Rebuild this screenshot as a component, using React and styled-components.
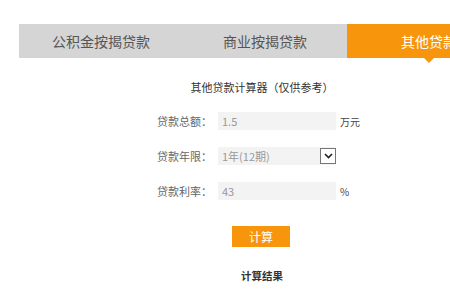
import React, { useState } from 'react'
import styled, { createGlobalStyle } from 'styled-components'

const GlobalStyle = createGlobalStyle`
  body {
    margin: 0;
    background: #fff;
    font-family: "Noto Sans CJK SC", "Liberation Sans", sans-serif;
  }
`

const tabs = ['公积金按揭贷款', '商业按揭贷款', '其他贷款']

const App = () => {
  const [active, setActive] = useState(2)

  return (
    <Page>
      <GlobalStyle />
      <TabBar>
        {tabs.map((t, i) => (
          <Tab key={t} $active={i === active} onClick={() => setActive(i)}>
            {t}
          </Tab>
        ))}
      </TabBar>

      <Content>
        <Title>其他贷款计算器（仅供参考）</Title>

        <Form>
          <Label>贷款总额：</Label>
          <Field>1.5</Field>
          <Unit>万元</Unit>

          <Label>贷款年限：</Label>
          <Field>
            1年(12期)
            <DropBox>
              <svg width="9" height="6" viewBox="0 0 9 6">
                <path d="M1 1 L4.5 4.5 L8 1" fill="none" stroke="#222" strokeWidth="1.6" />
              </svg>
            </DropBox>
          </Field>
          <Unit />

          <Label>贷款利率：</Label>
          <Field>43</Field>
          <Unit>%</Unit>
        </Form>

        <CalcButton>计算</CalcButton>
        <Result>计算结果</Result>
      </Content>
    </Page>
  )
}

export default App

const Page = styled.div`
  width: 450px;
  height: 300px;
  overflow: hidden;
  padding-top: 24px;
  box-sizing: border-box;
`

const TabBar = styled.div`
  display: flex;
  margin-left: 19px;
  width: 431px;
  height: 34px;
`

const Tab = styled.div`
  position: relative;
  flex-shrink: 0;
  width: 164px;
  height: 34px;
  line-height: 34px;
  text-align: center;
  font-size: 14px;
  color: ${(p) => (p.$active ? '#fff' : '#555')};
  background: ${(p) => (p.$active ? '#f7950d' : '#d5d5d5')};
  white-space: nowrap;
  cursor: pointer;

  &::after {
    content: '';
    display: ${(p) => (p.$active ? 'block' : 'none')};
    position: absolute;
    left: 77px;
    top: 34px;
    border-left: 5px solid transparent;
    border-right: 5px solid transparent;
    border-top: 5px solid #f7950d;
  }
`

const Content = styled.div`
  display: flex;
  flex-direction: column;
  align-items: center;
  padding-left: 74px;
`

const Title = styled.div`
  margin-top: 21px;
  font-size: 11px;
  line-height: 16px;
  color: #333;
`

const Form = styled.div`
  display: grid;
  grid-template-columns: 52px 118px 30px;
  column-gap: 9px;
  row-gap: 17px;
  align-items: center;
  margin-top: 17px;
  margin-left: 8px;
`

const Label = styled.div`
  font-size: 11px;
  color: #666;
  text-align: right;
  white-space: nowrap;
`

const Field = styled.div`
  position: relative;
  height: 18px;
  line-height: 18px;
  padding-left: 4px;
  background: #f3f3f3;
  font-size: 11px;
  color: #999;
`

const DropBox = styled.span`
  position: absolute;
  right: 0;
  top: 1px;
  width: 16px;
  height: 16px;
  box-sizing: border-box;
  border: 1px solid #777;
  background: #fff;
  display: flex;
  align-items: center;
  justify-content: center;
`

const Unit = styled.div`
  font-size: 10px;
  color: #444;
  margin-left: -5px;
`

const CalcButton = styled.button`
  margin-top: 26px;
  margin-left: -2px;
  width: 58px;
  height: 21px;
  border: none;
  background: #f7950d;
  color: #fff;
  font-family: inherit;
  font-size: 12px;
  padding: 0;
  cursor: pointer;
`

const Result = styled.div`
  margin-top: 21px;
  font-size: 10.5px;
  font-weight: bold;
  color: #333;
`
